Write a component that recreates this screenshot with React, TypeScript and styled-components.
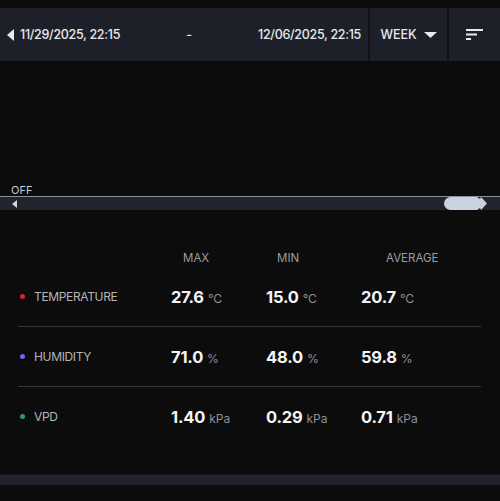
import styled, { createGlobalStyle } from "styled-components";

const GlobalStyle = createGlobalStyle`
  html, body {
    margin: 0;
    padding: 0;
    background: #0c0c0d;
  }
  body {
    font-family: Inter, "Liberation Sans", sans-serif;
    color: #e6e6e8;
  }
`;

const Page = styled.div`
  width: 500px;
  height: 501px;
  display: flex;
  flex-direction: column;
  background: #0c0c0d;
  padding-top: 8px;
  box-sizing: border-box;
  overflow: hidden;
`;

const Header = styled.header`
  height: 53px;
  display: flex;
  align-items: stretch;
  background: #1d2029;
`;

const RangeBox = styled.div`
  flex: 1;
  display: flex;
  align-items: center;
  padding: 0 7px 0 7px;
  font-size: 12.5px;
  font-weight: 500;
  letter-spacing: -0.3px;
  color: #e8e9ec;
`;

const DateText = styled.span`
  margin-left: 6px;
`;

const Dash = styled.span`
  flex: 1;
  text-align: center;
`;

const HeaderCell = styled.div<{ $width: number }>`
  width: ${(p) => p.$width}px;
  box-sizing: border-box;
  display: flex;
  align-items: center;
  justify-content: center;
  border-left: 2px solid #121318;
  font-size: 12.5px;
  font-weight: 500;
  color: #e8e9ec;
  gap: 7px;
`;

const Chart = styled.div`
  height: 135px;
  position: relative;
`;

const OffLabel = styled.span`
  position: absolute;
  left: 11px;
  bottom: -1px;
  font-size: 11px;
  color: #c9cacd;
`;

const Slider = styled.div`
  height: 13px;
  border-top: 1px solid #8e9199;
  background: #22252d;
  display: flex;
  align-items: center;
  justify-content: space-between;
  padding: 0 13px 0 12px;
`;

const Stats = styled.div`
  flex: 1;
  padding: 40px 19px 0 18px;
`;

const Grid = styled.div`
  display: grid;
  grid-template-columns: 153px 95px 95px 1fr;
`;

const ColHead = styled.div<{ $pad: number }>`
  padding-left: ${(p) => p.$pad}px;
  font-size: 11.5px;
  color: #9c9da1;
  height: 16px;
  line-height: 16px;
`;

const Row = styled.div<{ $first?: boolean }>`
  display: grid;
  grid-template-columns: 153px 95px 95px 1fr;
  align-items: center;
  height: 59px;
  border-top: ${(p) => (p.$first ? "none" : "1px solid #34363c")};
  margin-top: ${(p) => (p.$first ? "1px" : "0")};
`;

const Label = styled.div`
  display: flex;
  align-items: center;
  gap: 9px;
  padding-left: 2px;
  font-size: 12px;
  letter-spacing: -0.35px;
  color: #b4b5b9;
`;

const Dot = styled.span<{ $color: string }>`
  width: 5px;
  height: 5px;
  border-radius: 50%;
  background: ${(p) => p.$color};
`;

const Value = styled.div`
  display: flex;
  align-items: baseline;
  gap: 4px;
  font-size: 16.5px;
  font-weight: 700;
  letter-spacing: -0.2px;
  color: #f4f4f5;
`;

const Unit = styled.span`
  font-size: 12px;
  font-weight: 400;
  letter-spacing: 0;
  color: #8f9095;
`;

const BottomBar = styled.div`
  height: 10px;
  background: #20232b;
  border-top: 1px solid #17191e;
  margin-bottom: 16px;
`;

const rows = [
  { name: "TEMPERATURE", color: "#e0202c", unit: "°C", vals: ["27.6", "15.0", "20.7"] },
  { name: "HUMIDITY", color: "#6f63f0", unit: "%", vals: ["71.0", "48.0", "59.8"] },
  { name: "VPD", color: "#2f9a6e", unit: "kPa", vals: ["1.40", "0.29", "0.71"] },
];

const App = () => {
  return (
    <>
      <GlobalStyle />
      <Page>
        <Header>
          <RangeBox>
            <svg width="7" height="12" viewBox="0 0 7 12">
              <path d="M7 0 L0 6 L7 12 Z" fill="#e8e9ec" />
            </svg>
            <DateText>11/29/2025, 22:15</DateText>
            <Dash>-</Dash>
            <span>12/06/2025, 22:15</span>
          </RangeBox>
          <HeaderCell $width={79}>
            WEEK
            <svg width="13" height="6" viewBox="0 0 13 6">
              <path d="M0 0 L13 0 L6.5 6 Z" fill="#e8e9ec" />
            </svg>
          </HeaderCell>
          <HeaderCell $width={53}>
            <svg width="17" height="12" viewBox="0 0 17 12">
              <rect x="0" y="0" width="17" height="2" fill="#e8e9ec" />
              <rect x="0" y="4.5" width="11" height="2" fill="#e8e9ec" />
              <rect x="0" y="9" width="5" height="2" fill="#e8e9ec" />
            </svg>
          </HeaderCell>
        </Header>
        <Chart>
          <OffLabel>OFF</OffLabel>
        </Chart>
        <Slider>
          <svg width="5" height="8" viewBox="0 0 5 8">
            <path d="M5 0 L0 4 L5 8 Z" fill="#d0d6df" />
          </svg>
          <svg width="43" height="13" viewBox="0 0 43 13">
            <path
              d="M6.5 0 H33 L36 2 L37 0 L43 6.5 L37 13 L36 11 L33 13 H6.5 A6.5 6.5 0 0 1 6.5 0 Z"
              fill="#c9d2de"
            />
          </svg>
        </Slider>
        <Stats>
          <Grid>
            <div />
            <ColHead $pad={12}>MAX</ColHead>
            <ColHead $pad={11}>MIN</ColHead>
            <ColHead $pad={25}>AVERAGE</ColHead>
          </Grid>
          {rows.map((r, i) => (
            <Row key={r.name} $first={i === 0}>
              <Label>
                <Dot $color={r.color} />
                {r.name}
              </Label>
              {r.vals.map((v, j) => (
                <Value key={j}>
                  {v}
                  <Unit>{r.unit}</Unit>
                </Value>
              ))}
            </Row>
          ))}
        </Stats>
        <BottomBar />
      </Page>
    </>
  );
};

export default App;
